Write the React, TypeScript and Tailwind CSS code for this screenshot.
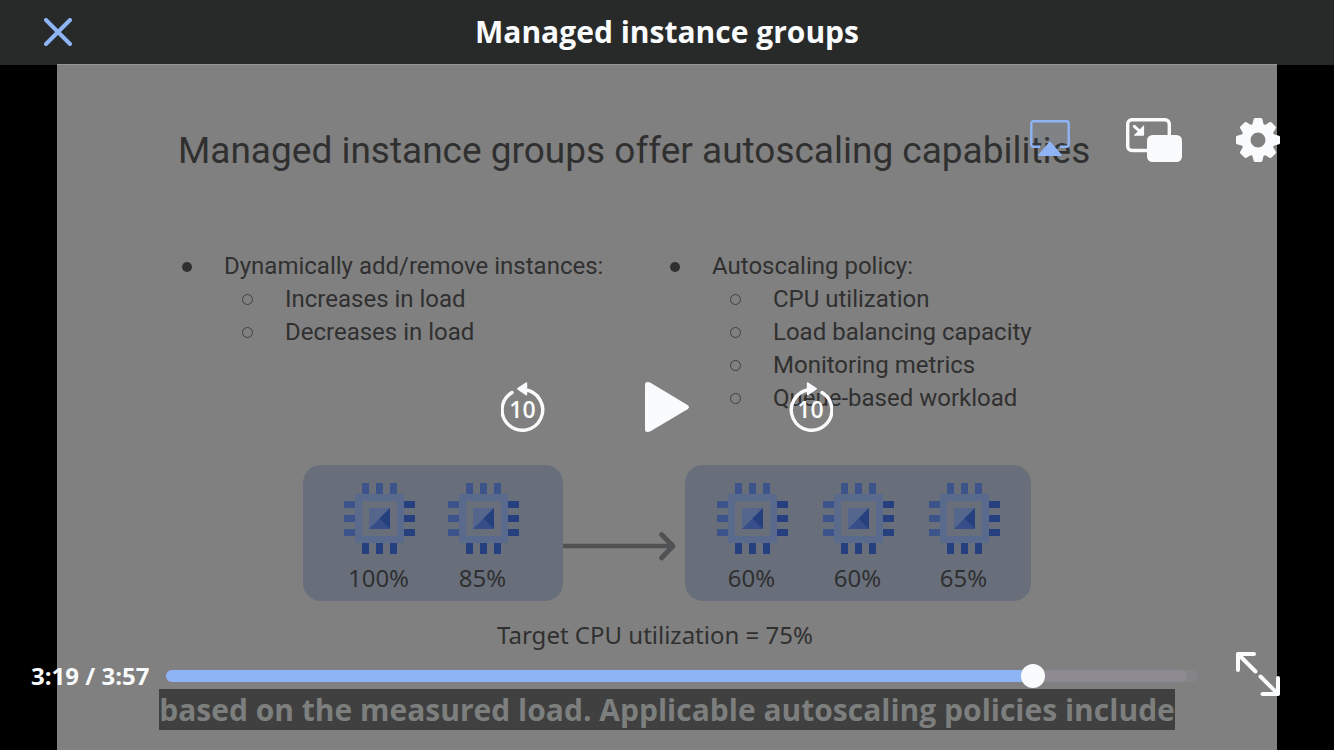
import { useState } from "react";

const PINS = [18, 32, 46];

function Chip() {
  return (
    <svg viewBox="0 0 71 71" className="block h-[71px] w-[71px]" aria-hidden="true">
      {PINS.map((p) => (
        <g key={p}>
          <rect x={p} y="0" width="7" height="11" fill="#3c5489" />
          <rect x={p} y="60" width="7" height="11" fill="#26407f" />
          <rect x="0" y={p} width="11" height="7" fill="#3c5489" />
          <rect x="60" y={p} width="11" height="7" fill="#26407f" />
        </g>
      ))}
      <path fillRule="evenodd" fill="#5a6a8c" d="M11 11h49v49H11z M18 18v35h35V18z" />
      <rect x="25" y="25" width="21" height="21" fill="#55668d" />
      <path d="M46 25v21H25z" fill="#364f88" />
      <path d="M46 25v21L35.500 35.500z" fill="#26407f" />
    </svg>
  );
}

function Instance({ load }: { load: string }) {
  return (
    <div className="flex w-[71px] flex-col items-center">
      <Chip />
      <span className="mt-1.5 pr-0.5 font-['Noto_Sans',sans-serif] text-2xl leading-9">{load}</span>
    </div>
  );
}

function Topic({ title, items }: { title: string; items: string[] }) {
  return (
    <ul className="flex-1">
      <li>
        <div className="flex items-center">
          <span className="mr-8 ml-1 h-2.5 w-2.5 rounded-full bg-[#303030]" />
          {title}
        </div>
        <ul>
          {items.map((item) => (
            <li key={item} className="flex items-center">
              <span className="mr-8 ml-16 h-[11px] w-[11px] rounded-full border border-[#404040]" />
              {item}
            </li>
          ))}
        </ul>
      </li>
    </ul>
  );
}

function SkipIcon({ forward = false }: { forward?: boolean }) {
  return (
    <svg viewBox="0 0 44 50" className="block h-[50px] w-11" aria-hidden="true">
      <g transform={forward ? "translate(44 0) scale(-1 1)" : undefined}>
        <path d="M11 10.500A20.300 20.300 0 1 0 24 7.800" fill="none" stroke="#fafbfd" strokeWidth="3.400" strokeLinecap="round" />
        <path d="M17 6.700L25.300 1.200V12.600z" fill="#fafbfd" stroke="#fafbfd" strokeWidth="1.800" strokeLinejoin="round" />
      </g>
      <text x="21.500" y="35.500" textAnchor="middle" fill="#fafbfd" fontFamily="Open Sans, sans-serif" fontWeight="600" fontSize="23">
        10
      </text>
    </svg>
  );
}

const TEETH = [0, 45, 90, 135, 180, 225, 270, 315];

function GearIcon() {
  return (
    <svg viewBox="-22 -22 44 44" className="block h-11 w-11" aria-hidden="true">
      <circle r="11.800" fill="none" stroke="#fafbfd" strokeWidth="8.600" />
      {TEETH.map((a) => (
        <path
          key={a}
          transform={`rotate(${a})`}
          fill="#fafbfd"
          d="M-2.900-22h5.800q1.100 0 1.400 1l1.100 4.500q.3 1.200 1.600 1.700l-2 4h-10l-2-4q1.300-.5 1.600-1.700l1.100-4.500q.3-1 1.400-1z"
        />
      ))}
    </svg>
  );
}

const DURATION = 237;

function clock(s: number) {
  return `${Math.floor(s / 60)}:${String(s % 60).padStart(2, "0")}`;
}

export default function App() {
  const [time, setTime] = useState(199);
  const played = (time / DURATION) * 100;
  const skip = (d: number) => setTime((t) => Math.min(DURATION, Math.max(0, t + d)));

  return (
    <div className="flex min-h-screen flex-col bg-black font-['Open_Sans',sans-serif]">
      <header className="grid h-16 grid-cols-[1fr_auto_1fr] items-center bg-[#282a29] px-11">
        <button aria-label="Close" className="justify-self-start">
          <svg viewBox="0 0 28 28" className="block h-7 w-7" aria-hidden="true">
            <path d="M2 2l24 24M26 2L2 26" stroke="#8fb4f6" strokeWidth="4" strokeLinecap="round" />
          </svg>
        </button>
        <h1 className="text-3xl leading-10 font-bold text-[#fafbfd]">Managed instance groups</h1>
      </header>

      <main className="relative flex flex-1 flex-col border-t border-[#282a29]">
        <section
          aria-label="Slide"
          className="mx-[57px] -mt-px flex flex-1 flex-col border-t border-[#959595] bg-[#808080] pt-16 pb-5 font-['Roboto',sans-serif] text-[#303030]"
        >
          <h2 className="px-[121px] text-[37px] leading-[44px]">
            Managed instance groups offer autoscaling capabilities
          </h2>
          <div className="mt-[77px] flex min-h-[165px] pr-[123px] pl-[121px] text-2xl leading-[33px]">
            <Topic title="Dynamically add/remove instances:" items={["Increases in load", "Decreases in load"]} />
            <Topic
              title="Autoscaling policy:"
              items={["CPU utilization", "Load balancing capacity", "Monitoring metrics", "Queue-based workload"]}
            />
          </div>
          <div className="mt-[50px] flex justify-center">
            <div className="flex h-[136px] gap-[33px] rounded-[18px] bg-[#686f7b] pt-[18px] pr-11 pl-[41px]">
              <Instance load="100%" />
              <Instance load="85%" />
            </div>
            <svg viewBox="0 0 122 136" className="h-[136px] w-[122px]" aria-hidden="true">
              <path d="M0 81h109" stroke="#505152" strokeWidth="4.500" fill="none" />
              <path d="M98.500 69.500L110 81L98.500 93" stroke="#505152" strokeWidth="4.800" fill="none" strokeLinecap="round" strokeLinejoin="round" />
            </svg>
            <div className="flex h-[136px] gap-[35px] rounded-[18px] bg-[#686f7b] pt-[18px] pr-[31px] pl-8">
              <Instance load="60%" />
              <Instance load="60%" />
              <Instance load="65%" />
            </div>
          </div>
          <p className="mt-4 pr-6 text-center font-['Noto_Sans',sans-serif] text-2xl leading-9">
            Target CPU utilization = 75%
          </p>
          <p className="mt-auto self-center bg-[#404040] font-['Open_Sans',sans-serif] text-3xl leading-[41px] font-bold whitespace-nowrap text-[#7d7f7e]">
            based on the measured load. Applicable autoscaling policies include
          </p>
        </section>

        <div className="absolute inset-0 flex flex-col justify-between pt-[53px] pb-[54px]">
          <div className="flex items-center justify-end pr-[54px]">
            <button aria-label="AirPlay" className="mr-14">
              <svg viewBox="0 0 40 44" className="block h-11 w-10" aria-hidden="true">
                <rect x="1.300" y="3.300" width="37.400" height="25.400" rx="2" fill="#8fb4f6" fillOpacity=".06" />
                <path d="M10 28.700H3.500a2.200 2.200 0 0 1-2.200-2.200v-21a2.200 2.200 0 0 1 2.200-2.200h33a2.200 2.200 0 0 1 2.200 2.200v21a2.200 2.200 0 0 1-2.200 2.200H30" fill="none" stroke="#8fb4f6" strokeWidth="2.400" />
                <path d="M19.200 24q.8-.9 1.600 0L31.500 36.500q.8 1.500-.5 1.500H9q-1.300 0-.5-1.500z" fill="#8fb4f6" />
              </svg>
            </button>
            <button aria-label="Picture in picture" className="mr-[54px]">
              <svg viewBox="0 0 56 44" className="block h-11 w-14" aria-hidden="true">
                <path d="M21 32.500H6a4.300 4.300 0 0 1-4.300-4.300V6A4.300 4.300 0 0 1 6 1.700h33A4.300 4.300 0 0 1 43.300 6v11" fill="none" stroke="#fafbfd" strokeWidth="3.400" />
                <rect x="21" y="17" width="35" height="27" rx="5.500" fill="#fafbfd" />
                <path d="M8.300 8.300L14 13.500" stroke="#fafbfd" strokeWidth="3" strokeLinecap="round" />
                <path d="M17.300 7.700q.8-.8.800.3v8.800q0 1-1 1H8.500q-1.100 0-.3-.8z" fill="#fafbfd" />
              </svg>
            </button>
            <button aria-label="Settings">
              <GearIcon />
            </button>
          </div>

          <div className="flex items-center justify-center gap-[100px]">
            <button aria-label="Back 10 seconds" onClick={() => skip(-10)}>
              <SkipIcon />
            </button>
            <button aria-label="Play">
              <svg viewBox="0 0 44 50" className="block h-[50px] w-11" aria-hidden="true">
                <path d="M0 2.500Q0 0 2.500 0q1.500 0 3 .8L42.500 23q3 2 0 4.200L5.500 49.200q-1.500.8-3 .8Q0 50 0 47.500z" fill="#fafbfd" />
              </svg>
            </button>
            <button aria-label="Forward 10 seconds" onClick={() => skip(10)}>
              <SkipIcon forward />
            </button>
          </div>

          <div className="flex items-center pr-[54px] pl-[31px]">
            <div className="mr-[38px] flex flex-1 items-center pt-1">
              <span className="w-[135px] text-2xl leading-8 font-bold whitespace-nowrap text-[#fafbfd]">
                {clock(time)} / {clock(DURATION)}
              </span>
              <div className="relative h-3 flex-1 rounded-full bg-[#858589]">
                <div className="mr-[11px] h-3 rounded-full bg-[#8e8c92]" />
                <div className="absolute inset-y-0 left-0 rounded-full bg-[#8fb4f6]" style={{ width: `${played}%` }} />
                <div className="absolute -top-1.5 -ml-3 h-6 w-6 rounded-full bg-[#fafbfd]" style={{ left: `${played}%` }} />
                <input
                  type="range"
                  aria-label="Seek"
                  min={0}
                  max={DURATION}
                  value={time}
                  onChange={(e) => setTime(Number(e.target.value))}
                  className="absolute -inset-y-2 left-0 w-full cursor-pointer opacity-0"
                />
              </div>
            </div>
            <button aria-label="Full screen">
              <svg viewBox="0 0 44 44" className="block h-11 w-11" aria-hidden="true">
                <path d="M2 18V2h16M2 2l17.500 17.500M42 26v16H26.500M42 42L24.500 24.500" fill="none" stroke="#fafbfd" strokeWidth="4" strokeLinecap="round" strokeLinejoin="round" />
              </svg>
            </button>
          </div>
        </div>
      </main>
    </div>
  );
}
